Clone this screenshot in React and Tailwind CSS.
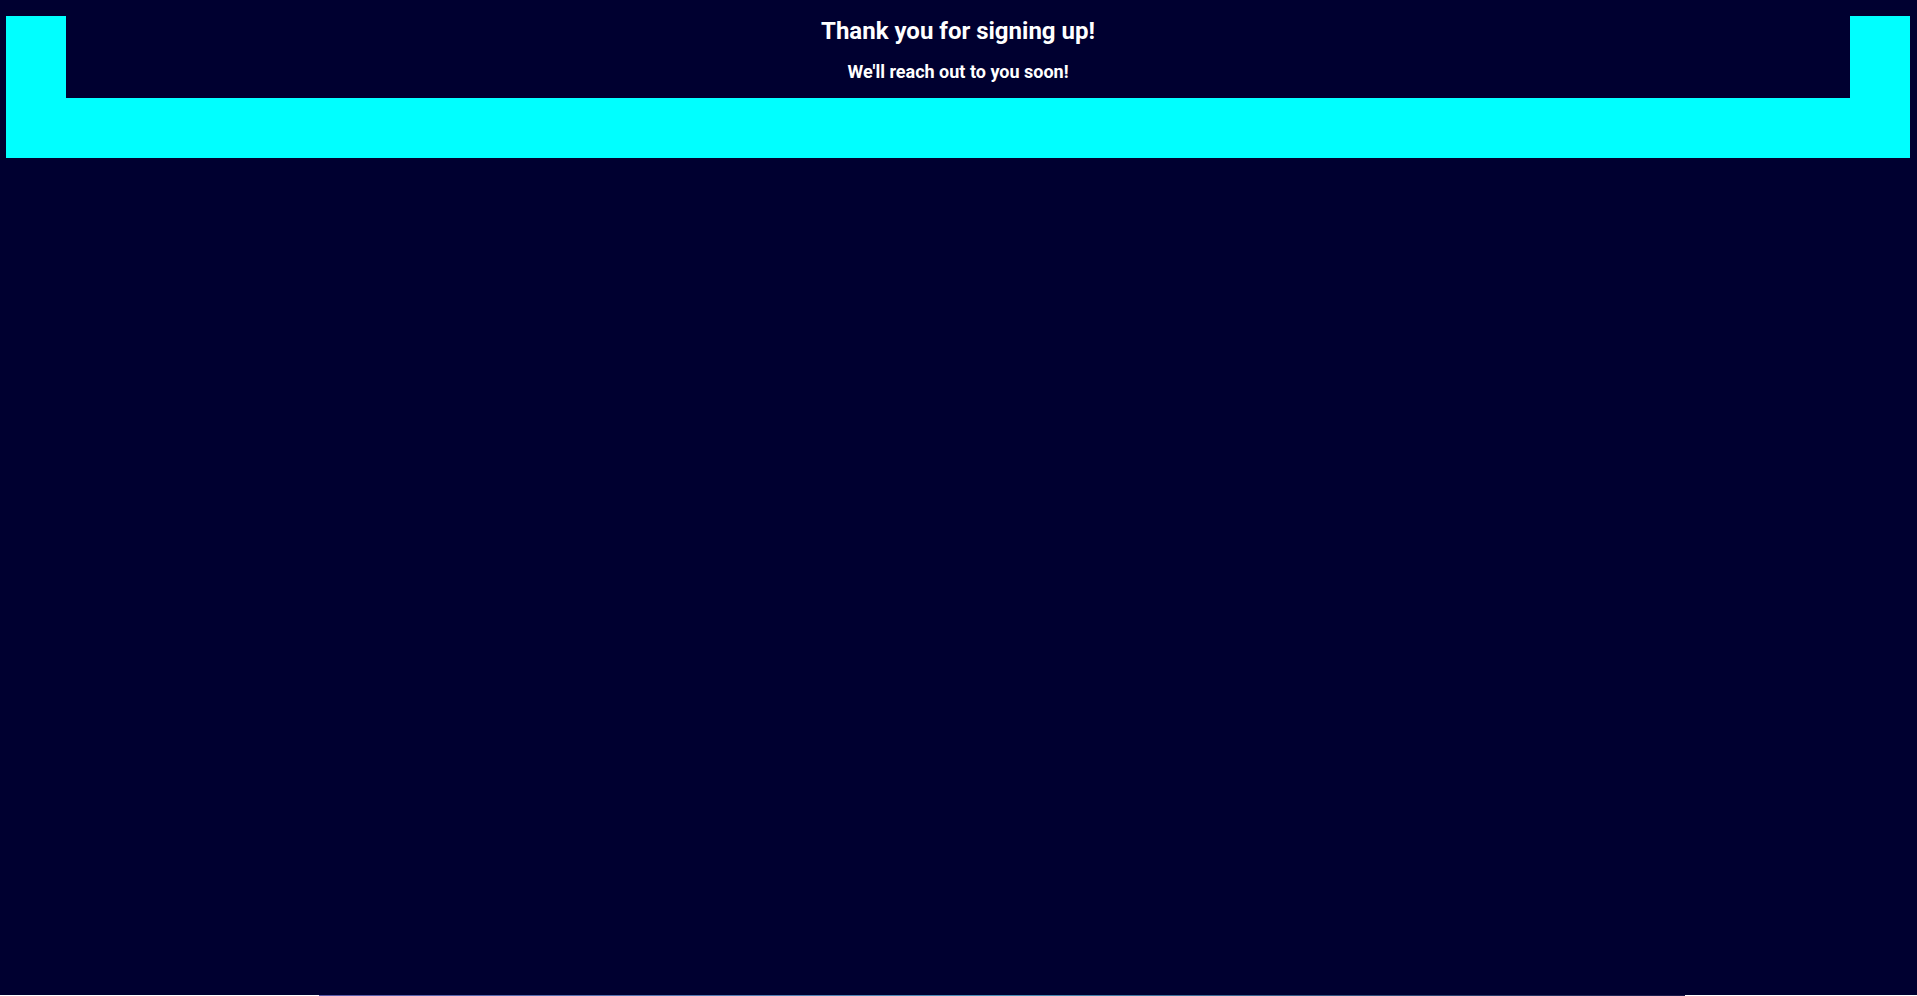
export default function App() {
  return (
    <div className="font-['Roboto',sans-serif]">
      {/* page */}
      <div className="min-h-[995px] bg-[#000030] pt-[16px] pl-[6px] pr-[7px]">
        {/* cyan frame */}
        <div className="bg-[#00ffff] px-[60px] pb-[60px]">
          <div className="bg-[#000030] pt-[1px] pb-[16px] flex flex-col items-center text-white">
            <h1 className="text-[24px] leading-[28px] font-bold">Thank you for signing up!</h1>
            <p className="mt-[16px] text-[18px] leading-[21px] font-bold">We'll reach out to you soon!</p>
          </div>
        </div>
      </div>

      {/* top edge of the next section */}
      <div className="bg-white h-[1px] pl-[319px]">
        <div className="h-[1px] w-[1366px] bg-gradient-to-r from-[#5a5aa8] via-[#4a90b8] to-[#1a1a4a]" />
      </div>
    </div>
  );
}
